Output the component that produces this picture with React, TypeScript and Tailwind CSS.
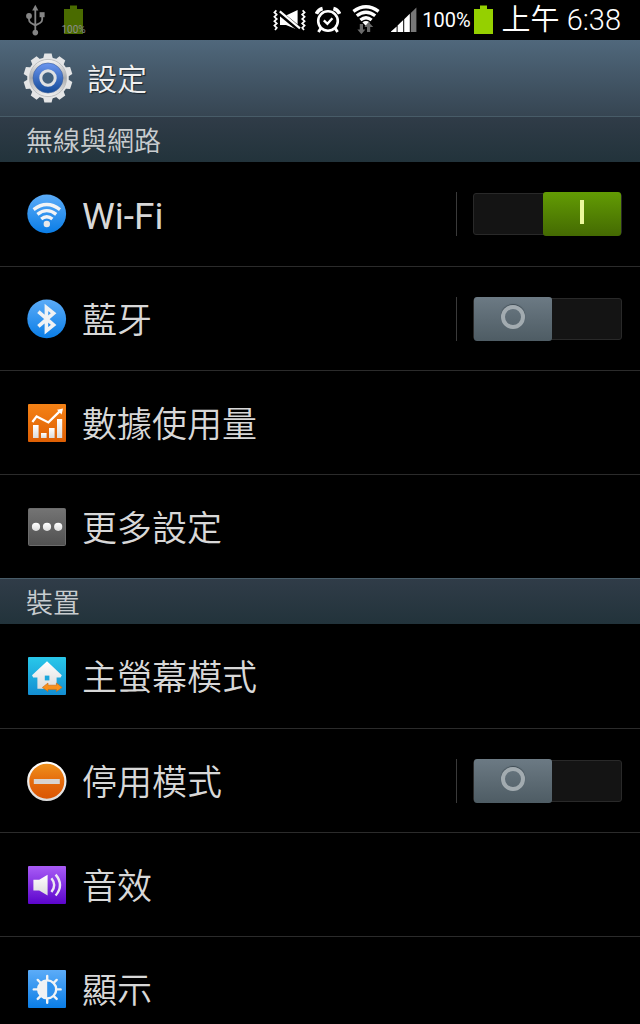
import React, { useState } from 'react';

type Item = {
  id: string;
  label: string;
  icon: React.ReactNode;
  toggle?: boolean;
};

function WifiIcon() {
  return (
    <svg viewBox="0 0 40 40" className="size-10 shrink-0" aria-hidden="true">
      <defs>
        <linearGradient id="blue" x1="0" y1="0" x2="0" y2="1">
          <stop offset="0" stopColor="#5cacf8" />
          <stop offset="1" stopColor="#0a7de6" />
        </linearGradient>
        <linearGradient id="silver" x1="0" y1="0" x2="0" y2="1">
          <stop offset="0" stopColor="#ffffff" />
          <stop offset="1" stopColor="#dcdcdc" />
        </linearGradient>
      </defs>
      <circle cx="19.7" cy="19.8" r="19.4" fill="url(#blue)" />
      <g fill="none" stroke="#f2f4f6" strokeWidth="3.3">
        <path d="M6.6 15.6 Q19.8 5.4 33 15.6" />
        <path d="M10.4 20.4 Q19.8 12.8 29.2 20.4" />
        <path d="M14.2 25 Q19.8 20.4 25.4 25" />
      </g>
      <circle cx="19.8" cy="30" r="3.2" fill="#e6e8ea" />
    </svg>
  );
}

function BluetoothIcon() {
  return (
    <svg viewBox="0 0 40 40" className="size-10 shrink-0" aria-hidden="true">
      <circle cx="19.7" cy="19.8" r="19.4" fill="url(#blue)" />
      <path
        d="M11.4 12.6 L26.6 26 L19.4 31.8 V8.4 L26.6 14.2 L11.4 27.4"
        fill="none"
        stroke="#f0f2f4"
        strokeWidth="3.6"
      />
    </svg>
  );
}

function DataUsageIcon() {
  return (
    <svg viewBox="0 0 40 40" className="size-10 shrink-0" aria-hidden="true">
      <defs>
        <linearGradient id="orange" x1="0" y1="0" x2="0" y2="1">
          <stop offset="0" stopColor="#f58216" />
          <stop offset="1" stopColor="#de5f04" />
        </linearGradient>
      </defs>
      <rect x="1" y="1" width="38" height="38" rx="1" fill="url(#orange)" />
      <g fill="url(#silver)">
        <rect x="6" y="22" width="5.6" height="13" />
        <rect x="14" y="30" width="5.6" height="5" />
        <rect x="22" y="25" width="5.6" height="10" />
        <rect x="30" y="16" width="5.2" height="19" />
      </g>
      <path d="M5.4 19 L9.6 13.4 L21.4 19.4 L32.6 8.4" fill="none" stroke="#fff" strokeWidth="2.2" />
      <path d="M30 6.8 L36 5.6 L34.6 11.4 Z" fill="#fff" />
    </svg>
  );
}

function MoreIcon() {
  return (
    <svg viewBox="0 0 40 40" className="size-10 shrink-0" aria-hidden="true">
      <defs>
        <linearGradient id="gray" x1="0" y1="0" x2="0" y2="1">
          <stop offset="0" stopColor="#747474" />
          <stop offset="1" stopColor="#515151" />
        </linearGradient>
      </defs>
      <rect x="1.5" y="1.5" width="37" height="37" rx="1" fill="url(#gray)" stroke="#6c6c6c" />
      <g fill="url(#silver)">
        <circle cx="9" cy="19.8" r="4.1" />
        <circle cx="20" cy="19.8" r="4.1" />
        <circle cx="31.2" cy="19.8" r="4.1" />
      </g>
    </svg>
  );
}

function HomeModeIcon() {
  return (
    <svg viewBox="0 0 40 40" className="size-10 shrink-0" aria-hidden="true">
      <defs>
        <linearGradient id="cyan" x1="0" y1="0" x2="0" y2="1">
          <stop offset="0" stopColor="#29c8ea" />
          <stop offset="1" stopColor="#138ed2" />
        </linearGradient>
      </defs>
      <rect x="1" y="1" width="38" height="38" rx="1" fill="url(#cyan)" />
      <path
        d="M20 5.2 L34.8 19.2 L33.6 21.6 H29.6 V32.8 H10.4 V21.6 H6.2 L5 19.2 Z"
        fill="url(#silver)"
      />
      <rect x="17.8" y="19.6" width="4.6" height="4.8" fill="#1ba7dc" />
      <path
        d="M15.4 31.4 L21 27 V29.2 H29.4 V27 L35.2 31.4 L29.4 35.6 V33.4 H21 V35.6 Z"
        fill="#f8901c"
        stroke="#c86a10"
        strokeWidth="0.6"
      />
    </svg>
  );
}

function BlockingIcon() {
  return (
    <svg viewBox="0 0 40 40" className="size-10 shrink-0" aria-hidden="true">
      <defs>
        <linearGradient id="amber" x1="0" y1="0" x2="0" y2="1">
          <stop offset="0" stopColor="#ee931f" />
          <stop offset="0.5" stopColor="#e56b0c" />
          <stop offset="1" stopColor="#d95404" />
        </linearGradient>
      </defs>
      <circle cx="19.8" cy="20.2" r="18.6" fill="url(#amber)" stroke="url(#silver)" strokeWidth="2.2" />
      <rect x="6.8" y="18" width="26" height="5" fill="#d8d3d0" />
    </svg>
  );
}

function SoundIcon() {
  return (
    <svg viewBox="0 0 40 40" className="size-10 shrink-0" aria-hidden="true">
      <defs>
        <linearGradient id="violet" x1="0" y1="0" x2="0" y2="1">
          <stop offset="0" stopColor="#a95cf6" />
          <stop offset="1" stopColor="#5c05cc" />
        </linearGradient>
      </defs>
      <rect x="1" y="1" width="38" height="38" rx="1" fill="url(#violet)" />
      <path d="M6.4 14.8 H12.2 L20.6 9.8 V30.4 L12.2 25.6 H6.4 Z" fill="url(#silver)" />
      <g fill="none" stroke="#ece8f2" strokeWidth="2.4">
        <path d="M24.4 13.2 Q30 20 24.4 27" />
        <path d="M28.6 9.6 Q37.4 20 28.6 30.6" />
      </g>
    </svg>
  );
}

function DisplayIcon() {
  return (
    <svg viewBox="0 0 40 40" className="size-10 shrink-0" aria-hidden="true">
      <rect x="1" y="1" width="38" height="38" rx="1" fill="url(#blue)" />
      <g stroke="#f2f4f6" strokeWidth="2.4" strokeLinecap="round">
        {[0, 45, 90, 135, 180, 225, 270, 315].map((deg) => (
          <path key={deg} d="M20.2 7 V11" transform={`rotate(${deg} 20.2 20.4)`} />
        ))}
      </g>
      <circle cx="20.2" cy="20.4" r="9" fill="#2f92ee" stroke="#f2f4f6" strokeWidth="2.4" />
      <path d="M20.2 11.4 A9 9 0 0 0 20.2 29.4 Z" fill="#f0f2f4" />
    </svg>
  );
}

function GearIcon() {
  const teeth = [0, 36, 72, 108, 144, 180, 216, 252, 288, 324];
  return (
    <svg viewBox="0 0 50 50" className="size-[50px] shrink-0" aria-hidden="true">
      <defs>
        <linearGradient id="steel" x1="0" y1="0" x2="0" y2="1">
          <stop offset="0" stopColor="#f6f6f6" />
          <stop offset="0.5" stopColor="#a9abad" />
          <stop offset="1" stopColor="#f2f2f2" />
        </linearGradient>
        <linearGradient id="royal" x1="0" y1="0" x2="0" y2="1">
          <stop offset="0" stopColor="#6b96f0" />
          <stop offset="1" stopColor="#134a98" />
        </linearGradient>
      </defs>
      <g fill="#e4e5e6">
        {teeth.map((deg) => (
          <path key={deg} d="M19.8 7 L21.4 0.6 H28.6 L30.2 7 Z" transform={`rotate(${deg} 25 25)`} />
        ))}
      </g>
      <circle cx="25" cy="25" r="20.8" fill="#e4e5e6" />
      <circle cx="25" cy="25" r="18.6" fill="url(#steel)" stroke="#b4b6b8" strokeWidth="0.8" />
      <circle cx="25" cy="25" r="15" fill="url(#royal)" stroke="#3d5f9c" strokeWidth="0.6" />
      <circle cx="25" cy="25" r="7.2" fill="#42607d" stroke="#dfe1e3" strokeWidth="3" />
    </svg>
  );
}

function StatusBattery({ className }: { className: string }) {
  return (
    <svg viewBox="0 0 19 30" className={className} fill="currentColor" aria-hidden="true">
      <path d="M6 0.6 H13 V4 H19 V29 H0 V4 H6 Z" />
    </svg>
  );
}

function StatusBar() {
  return (
    <div className="flex h-10 shrink-0 items-center justify-between bg-black pr-[19px] pl-[26px]">
      <div className="flex items-center gap-[15px]">
        <svg viewBox="0 0 20 32" className="h-8 w-5" fill="none" stroke="#858585" strokeWidth="1.8" aria-hidden="true">
          <path d="M9.3 4 V28 M3 11.6 V15.6 Q3 18 5 19 L9.3 21.4 L14 19 Q16.2 18 16.2 15.6 V10" />
          <path d="M6.2 6.4 L9.3 0.8 L12.4 6.4 Z" fill="#858585" stroke="none" />
          <circle cx="3" cy="12" r="2.9" fill="#858585" stroke="none" />
          <rect x="13.6" y="8.2" width="5" height="5" fill="#858585" stroke="none" />
          <circle cx="9.3" cy="28.6" r="2.8" fill="#858585" stroke="none" />
        </svg>
        <div className="relative flex w-[25px] justify-center">
          <StatusBattery className="h-[30px] w-[19px] text-[#4a6b00]" />
          <span className="absolute -bottom-px left-1/2 -translate-x-1/2 text-[10px] leading-[12px] text-[#8c8c8c]">100%</span>
        </div>
      </div>

      <div className="flex items-center text-white">
        {/* Muted, vibrate */}
        <svg viewBox="0 0 34 26" className="mr-2 h-[26px] w-[34px]" fill="none" stroke="#fff" aria-hidden="true">
          <g strokeWidth="1.7">
            <path d="M3.4 3.4 L1.4 5.4 L3.8 7.6 L1.4 9.8 L3.8 12 L1.4 14.2 L3.8 16.4 L1.4 18.6 L3.8 20.8 L2 23" />
            <path d="M29.6 3.4 L31.6 5.4 L29.2 7.6 L31.6 9.8 L29.2 12 L31.6 14.2 L29.2 16.4 L31.6 18.6 L29.2 20.8 L31 23" />
          </g>
          <path d="M7 8.4 H13 L24.6 3 V22.8 L13 18 H7 Z" fill="#fff" stroke="none" />
          <path d="M6 5.4 L26 21.8" stroke="#000" strokeWidth="5" />
          <path d="M6.8 4.4 L27 21.4" strokeWidth="2.2" />
        </svg>
        {/* Alarm */}
        <svg viewBox="0 0 26 28" className="mr-[11px] h-7 w-[26px]" fill="none" stroke="#fff" aria-hidden="true">
          <circle cx="13" cy="15" r="9.8" strokeWidth="2.6" />
          <path d="M8.8 14.4 L12.4 17.8 L17.4 12.2" strokeWidth="2.4" />
          <path d="M1.4 7.8 Q3.4 3.4 7.6 2.4 M24.6 7.8 Q22.6 3.4 18.4 2.4" strokeWidth="3.6" />
          <path d="M5.8 22.4 L3.4 26 M20.2 22.4 L22.6 26" strokeWidth="2.8" />
        </svg>
        {/* Wi-Fi with traffic arrows */}
        <svg viewBox="0 0 28 30" className="mr-[11px] h-[30px] w-7" aria-hidden="true">
          <g fill="none" stroke="#fff" strokeWidth="3.3">
            <path d="M1.4 6.4 Q14 -2.8 26.6 6.4" />
            <path d="M4.8 10.8 Q14 3.6 23.2 10.8" />
            <path d="M8.4 15 Q14 10.4 19.6 15" />
          </g>
          <path d="M10.4 17.2 Q14 14.6 17.6 17.2 L14 21 Z" fill="#fff" />
          <path d="M7.8 19 H11 V24.6 H13.4 L9.4 29.2 L5.4 24.6 H7.8 Z" fill="#6a6a6a" />
          <path d="M15 27 H18.2 V22 H21.2 L16.6 17 L12.4 22 H15 Z" fill="#6a6a6a" />
        </svg>
        {/* Signal */}
        <svg viewBox="0 0 26 26" className="mr-[5px] size-[26px]" fill="#fff" aria-hidden="true">
          <path d="M0 25 V24.6 L5.6 19.4 V25 Z" />
          <path d="M6.6 25 V18.4 L12.2 13 V25 Z" />
          <path d="M13.2 25 V12.2 L18.8 6.8 V25 Z" />
          <path d="M19.8 25 V6 L25.4 0.6 V25 Z" fill="#777" />
        </svg>
        <span className="mr-[3px] text-xl leading-10">100%</span>
        <StatusBattery className="mr-[9px] h-[30px] w-[19px] text-[#95d000]" />
        <span className="text-[29px] leading-10 font-[350]">上午 6:38</span>
      </div>
    </div>
  );
}

function Switch({ id, checked, onChange }: { id: string; checked: boolean; onChange: () => void }) {
  return (
    <span className="flex h-11 shrink-0 items-center border-l border-[#3a3a3a] pl-4">
      <span
        className={`relative flex h-[42px] w-[149px] items-center rounded-[3px] border border-[#292929] bg-[#141414] ${
          checked ? 'justify-end' : 'justify-start'
        }`}
      >
        <input
          id={id}
          type="checkbox"
          role="switch"
          checked={checked}
          onChange={onChange}
          className="absolute inset-0 z-10 cursor-pointer appearance-none"
        />
        {checked ? (
          <span className="-my-1 flex h-11 w-[78px] items-center justify-center rounded-[3px] bg-linear-to-b from-[#639c04] to-[#446a02]">
            <span className="mb-1 h-6 w-1 bg-[#ecf99c]" />
          </span>
        ) : (
          <span className="-my-1 flex h-11 w-[78px] items-center justify-center rounded-[3px] bg-linear-to-b from-[#6c7a84] to-[#4e5c64]">
            <span className="mb-1 size-6 rounded-full border-4 border-[#a2abb0] shadow-[0_-1px_1px_#3e4a52]" />
          </span>
        )}
      </span>
    </span>
  );
}

function SectionHeader({ children }: { children: React.ReactNode }) {
  return (
    <h2 className="h-[46px] border-t border-[#485c68] bg-linear-to-b from-[#303c48] to-[#22333b] pl-[26px] text-[27px] leading-[50px] font-[350] text-[#c8cccf]">
      {children}
    </h2>
  );
}

function RowLabel({ children }: { children: string }) {
  const latin = /^[\x00-\x7f]+$/.test(children);
  return (
    <span className={`pt-1.5 leading-[52px] ${latin ? 'text-[37px] font-normal' : 'text-[35px] font-[350]'}`}>
      {children}
    </span>
  );
}

const sections: { title: string; items: Item[] }[] = [
  {
    title: '無線與網路',
    items: [
      { id: 'wifi', label: 'Wi-Fi', icon: <WifiIcon />, toggle: true },
      { id: 'bluetooth', label: '藍牙', icon: <BluetoothIcon />, toggle: true },
      { id: 'data', label: '數據使用量', icon: <DataUsageIcon /> },
      { id: 'more', label: '更多設定', icon: <MoreIcon /> },
    ],
  },
  {
    title: '裝置',
    items: [
      { id: 'home', label: '主螢幕模式', icon: <HomeModeIcon /> },
      { id: 'blocking', label: '停用模式', icon: <BlockingIcon />, toggle: true },
      { id: 'sound', label: '音效', icon: <SoundIcon /> },
      { id: 'display', label: '顯示', icon: <DisplayIcon /> },
    ],
  },
];

export default function App() {
  const [on, setOn] = useState<Record<string, boolean>>({ wifi: true });

  return (
    <div className="flex h-screen flex-col overflow-hidden bg-black font-['Roboto','Noto_Sans_CJK_TC',sans-serif] text-[#d8d8d8]">
      <StatusBar />

      <header className="flex h-[76px] shrink-0 items-center gap-[14px] bg-linear-to-b from-[#50687c] to-[#364552] pl-[23px]">
        <GearIcon />
        <h1 className="pt-1 text-[30px] leading-10 font-[350] text-[#f0f0f0] [text-shadow:1px_1px_1px_#1c252c]">設定</h1>
      </header>

      <main className="flex-1 overflow-y-auto [scrollbar-width:none]">
        {sections.map((section) => (
          <section key={section.title}>
            <SectionHeader>{section.title}</SectionHeader>
            <ul>
              {section.items.map((item) => (
                <li key={item.id} className="flex h-[104px] items-center border-[#2b2b2b] pr-[18px] not-first:border-t">
                  {item.toggle ? (
                    <>
                      <label htmlFor={item.id} className="flex flex-1 items-center gap-[15px] pl-[27px]">
                        {item.icon}
                        <RowLabel>{item.label}</RowLabel>
                      </label>
                      <Switch
                        id={item.id}
                        checked={!!on[item.id]}
                        onChange={() => setOn({ ...on, [item.id]: !on[item.id] })}
                      />
                    </>
                  ) : (
                    <button type="button" className="flex flex-1 items-center gap-[15px] pl-[27px] text-left">
                      {item.icon}
                      <RowLabel>{item.label}</RowLabel>
                    </button>
                  )}
                </li>
              ))}
            </ul>
          </section>
        ))}
      </main>
    </div>
  );
}
